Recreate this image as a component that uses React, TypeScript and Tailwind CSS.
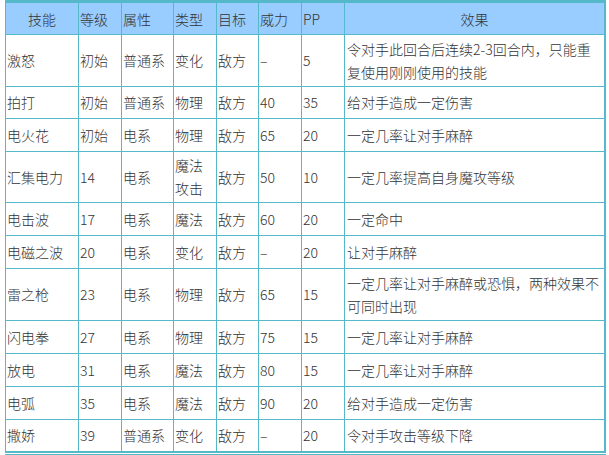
import React from 'react';

const cols = [
  { label: '技能', w: 'w-[73px]', center: true },
  { label: '等级', w: 'w-[43px]' },
  { label: '属性', w: 'w-[52px]' },
  { label: '类型', w: 'w-[43px]' },
  { label: '目标', w: 'w-[42px]' },
  { label: '威力', w: 'w-[43px]' },
  { label: 'PP', w: 'w-[43px]' },
  { label: '效果', w: 'w-[261px]', center: true },
];

// row height + cells; '|' marks a forced line break
const rows: { h: string; cells: string[] }[] = [
  { h: 'h-[52px]', cells: ['激怒', '初始', '普通系', '变化', '敌方', '–', '5', '令对手此回合后连续2-3回合内，只能重|复使用刚刚使用的技能'] },
  { h: 'h-[32px]', cells: ['拍打', '初始', '普通系', '物理', '敌方', '40', '35', '给对手造成一定伤害'] },
  { h: 'h-[33px]', cells: ['电火花', '初始', '电系', '物理', '敌方', '65', '20', '一定几率让对手麻醉'] },
  { h: 'h-[51px]', cells: ['汇集电力', '14', '电系', '魔法|攻击', '敌方', '50', '10', '一定几率提高自身魔攻等级'] },
  { h: 'h-[33px]', cells: ['电击波', '17', '电系', '魔法', '敌方', '60', '20', '一定命中'] },
  { h: 'h-[33px]', cells: ['电磁之波', '20', '电系', '变化', '敌方', '–', '20', '让对手麻醉'] },
  { h: 'h-[52px]', cells: ['雷之枪', '23', '电系', '物理', '敌方', '65', '15', '一定几率让对手麻醉或恐惧，两种效果不|可同时出现'] },
  { h: 'h-[33px]', cells: ['闪电拳', '27', '电系', '物理', '敌方', '75', '15', '一定几率让对手麻醉'] },
  { h: 'h-[33px]', cells: ['放电', '31', '电系', '魔法', '敌方', '80', '15', '一定几率让对手麻醉'] },
  { h: 'h-[33px]', cells: ['电弧', '35', '电系', '魔法', '敌方', '90', '20', '给对手造成一定伤害'] },
  { h: 'h-[33px]', cells: ['撒娇', '39', '普通系', '变化', '敌方', '–', '20', '令对手攻击等级下降'] },
];

function Lines({ text }: { text: string }) {
  return (
    <>
      {text.split('|').map((p, i) => (
        <div key={i} className="whitespace-nowrap">
          {p}
        </div>
      ))}
    </>
  );
}

export default function App() {
  return (
    <div className="w-[609px] h-[455px] overflow-hidden bg-white pl-[5px] font-['Noto_Sans_CJK_SC',sans-serif] font-light text-[14px] text-[#333]">
      <table className="table-fixed border-separate border-spacing-0 border-l border-t-[3px] border-[#55b9c9]">
        <thead>
          <tr>
            {cols.map((c, i) => (
              <th
                key={i}
                className={`${c.w} h-[32px] p-0 ${c.center ? 'text-center' : 'text-left pl-[1px]'} font-light bg-[#99ccff] border-b border-[#55b9c9] ${
                  i === cols.length - 1 ? 'border-r-2' : 'border-r'
                } leading-[20px] align-middle`}
              >
                {c.label}
              </th>
            ))}
          </tr>
        </thead>
        <tbody>
          {rows.map((r, ri) => (
            <tr key={ri}>
              {r.cells.map((cell, ci) => (
                <td
                  key={ci}
                  className={`${r.h} p-0 ${ci === 7 ? 'pl-[2px]' : 'pl-[1px]'} align-middle leading-[23px] border-[#55b9c9] ${
                    ci === 7 ? 'border-r-2' : 'border-r'
                  } ${ri === rows.length - 1 ? 'border-b-2' : 'border-b'}`}
                >
                  <Lines text={cell} />
                </td>
              ))}
            </tr>
          ))}
        </tbody>
      </table>
      <div className="flex h-[10px] mt-[1px]">
        <div className="w-[58px] border-l border-r border-t-2 border-[#55b9c9]" />
        <div className="w-[543px] border-t-2 border-[#55b9c9]" />
      </div>
    </div>
  );
}
